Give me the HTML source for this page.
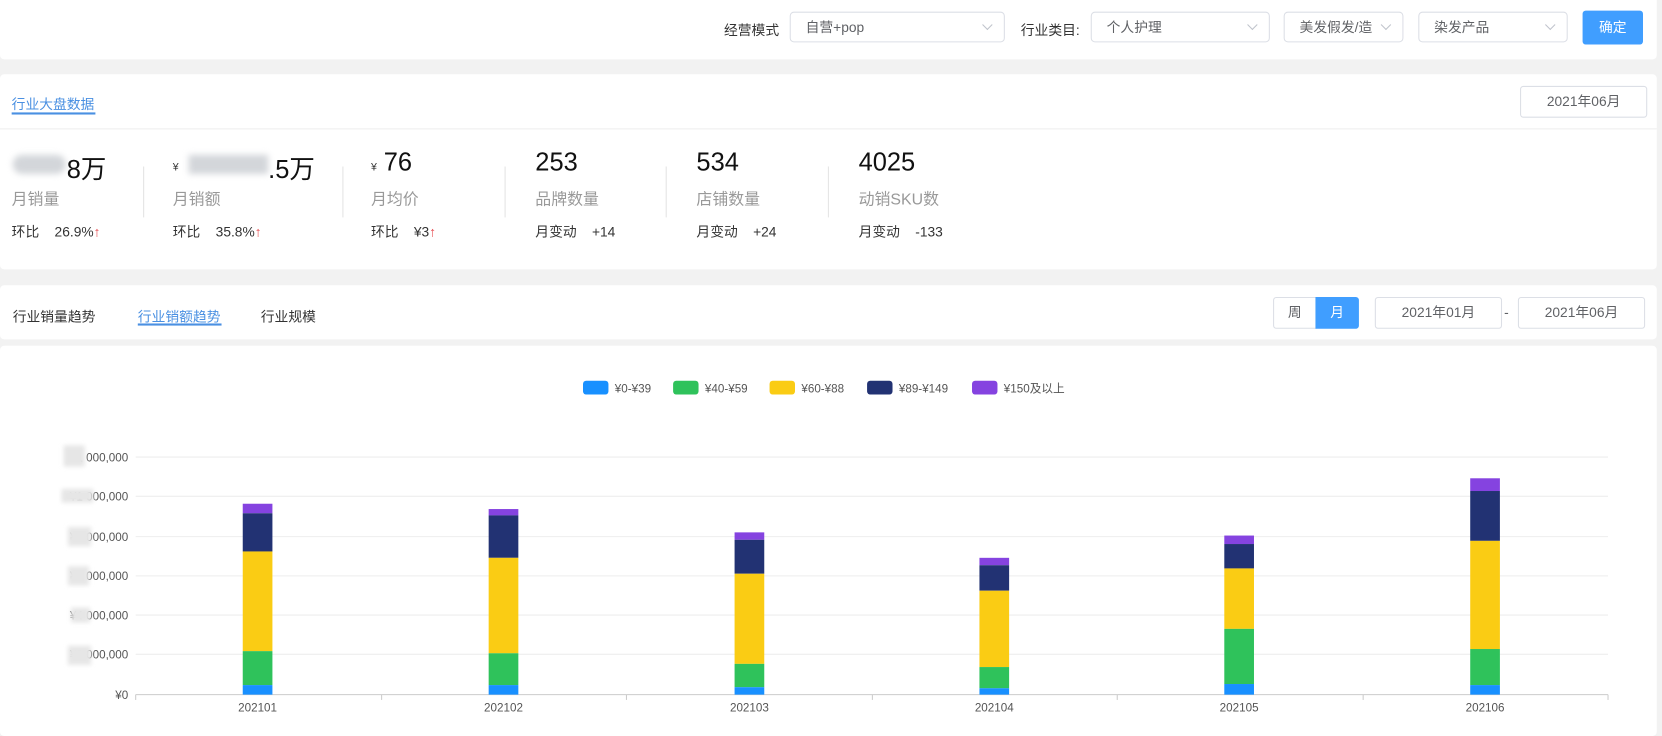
<!DOCTYPE html>
<html><head><meta charset="utf-8"><style>
html,body{margin:0;padding:0;width:1662px;height:736px;overflow:hidden;background:#f2f2f2;}
#w{position:absolute;left:0;top:0;width:1568px;height:694px;transform:scale(1.06,1.0605);transform-origin:0 0;font-family:"Liberation Sans","Noto Sans CJK SC",sans-serif;color:#333;}
.a{position:absolute;white-space:nowrap;}
.card{position:absolute;left:0;width:1563px;background:#fff;border-radius:4px;}
.sel{position:absolute;height:29px;border:1px solid #dcdfe6;border-radius:4px;box-sizing:border-box;font-size:13px;color:#606266;line-height:27px;padding-left:14px;padding-right:26px;background:#fff;overflow:hidden;text-overflow:clip;}
.sel:after{content:"";position:absolute;right:12px;top:8px;width:6px;height:6px;border-right:1px solid #c0c4cc;border-bottom:1px solid #c0c4cc;transform:rotate(45deg);background:#fff;}
.box{position:absolute;height:30px;border:1px solid #dcdfe6;border-radius:3px;box-sizing:border-box;font-size:13px;color:#606266;line-height:28px;text-align:center;background:#fff;}
.big{font-size:24px;color:#111;top:140px;}
.lab{font-size:15px;color:#999;top:177px;}
.row{font-size:13px;color:#333;top:208px;}
.up{color:#e5484d;}
.dv{position:absolute;top:157px;width:1px;height:48px;background:#e4e4e4;}
.blur{position:absolute;background:#d3d6da;filter:blur(3px);}
</style></head><body><div id="w">
<div class="card" style="top:0;height:56px;border-radius:0 0 4px 4px"></div>
<div class="a" style="left:683px;top:18px;font-size:13px">经营模式</div>
<div class="sel" style="left:745px;top:11px;width:203px">自营+pop</div>
<div class="a" style="left:963px;top:18px;font-size:13px">行业类目:</div>
<div class="sel" style="left:1029px;top:11px;width:169px">个人护理</div>
<div class="sel" style="left:1211px;top:11px;width:113px">美发假发/造型</div>
<div class="sel" style="left:1338px;top:11px;width:141px">染发产品</div>
<div class="a" style="left:1493px;top:10px;width:57px;height:32px;background:#409eff;border-radius:3px;color:#fff;font-size:13px;line-height:32px;text-align:center">确定</div>

<div class="card" style="top:70px;height:184px"></div>
<div class="a" style="left:11px;top:88px;font-size:13px;color:#4a90e2">行业大盘数据</div>
<div class="a" style="left:11px;top:106px;width:79px;height:2px;background:#4a90e2"></div>
<div class="a" style="left:0;top:121px;width:1563px;height:1px;background:#eee"></div>
<div class="box" style="left:1434px;top:81px;width:120px">2021年06月</div>

<div class="blur" style="left:12px;top:146px;width:50px;height:18px;border-radius:9px"></div>
<div class="a big" style="left:63px">8万</div>
<div class="a" style="left:163px;top:153px;font-size:10px">¥</div>
<div class="blur" style="left:178px;top:146px;width:75px;height:18px"></div>
<div class="a big" style="left:253px">.5万</div>
<div class="a" style="left:350px;top:153px;font-size:10px">¥</div>
<div class="a big" style="left:362px">76</div>
<div class="a big" style="left:505px">253</div>
<div class="a big" style="left:657px">534</div>
<div class="a big" style="left:810px">4025</div>
<div class="a lab" style="left:11px">月销量</div>
<div class="a lab" style="left:163px">月销额</div>
<div class="a lab" style="left:350px">月均价</div>
<div class="a lab" style="left:505px">品牌数量</div>
<div class="a lab" style="left:657px">店铺数量</div>
<div class="a lab" style="left:810px">动销SKU数</div>
<div class="a row" style="left:11px">环比 &nbsp;&nbsp;&nbsp;26.9%<span class="up">↑</span></div>
<div class="a row" style="left:163px">环比 &nbsp;&nbsp;&nbsp;35.8%<span class="up">↑</span></div>
<div class="a row" style="left:350px">环比 &nbsp;&nbsp;&nbsp;¥3<span class="up">↑</span></div>
<div class="a row" style="left:505px">月变动 &nbsp;&nbsp;&nbsp;+14</div>
<div class="a row" style="left:657px">月变动 &nbsp;&nbsp;&nbsp;+24</div>
<div class="a row" style="left:810px">月变动 &nbsp;&nbsp;&nbsp;-133</div>
<div class="dv" style="left:135px"></div><div class="dv" style="left:323px"></div><div class="dv" style="left:476px"></div><div class="dv" style="left:628px"></div><div class="dv" style="left:781px"></div>

<div class="card" style="top:269px;height:51px"></div>
<div class="a" style="left:12px;top:288px;font-size:13px">行业销量趋势</div>
<div class="a" style="left:130px;top:288px;font-size:13px;color:#4a90e2">行业销额趋势</div>
<div class="a" style="left:130px;top:305px;width:79px;height:2px;background:#4a90e2"></div>
<div class="a" style="left:246px;top:288px;font-size:13px">行业规模</div>
<div class="box" style="left:1201px;top:280px;width:41px;border-radius:3px 0 0 3px">周</div>
<div class="box" style="left:1241px;top:280px;width:41px;border-radius:0 3px 3px 0;background:#409eff;border-color:#409eff;color:#fff">月</div>
<div class="box" style="left:1297px;top:280px;width:120px">2021年01月</div>
<div class="a" style="left:1419px;top:287px;font-size:13px;color:#606266">-</div>
<div class="box" style="left:1432px;top:280px;width:120px">2021年06月</div>

<div class="card" style="top:326px;height:368px"></div>
<svg class="a" style="left:0;top:0" width="1568" height="694" font-family="Liberation Sans,Noto Sans CJK SC,sans-serif" font-size="11" fill="#555">
<defs><filter id="b"><feGaussianBlur stdDeviation="2"/></filter></defs>
<g>
<rect x="550" y="359" width="24" height="13" rx="3" fill="#1890ff"/><text x="580" y="370">¥0-¥39</text>
<rect x="635" y="359" width="24" height="13" rx="3" fill="#2fc25b"/><text x="665" y="370">¥40-¥59</text>
<rect x="726" y="359" width="24" height="13" rx="3" fill="#facc14"/><text x="756" y="370">¥60-¥88</text>
<rect x="818" y="359" width="24" height="13" rx="3" fill="#223273"/><text x="848" y="370">¥89-¥149</text>
<rect x="917" y="359" width="24" height="13" rx="3" fill="#8543e0"/><text x="947" y="370">¥150及以上</text>
</g>
<g stroke="#eee"><line x1="128" x2="1517" y1="431" y2="431"/><line x1="128" x2="1517" y1="468" y2="468"/><line x1="128" x2="1517" y1="506" y2="506"/><line x1="128" x2="1517" y1="543" y2="543"/><line x1="128" x2="1517" y1="580" y2="580"/><line x1="128" x2="1517" y1="617" y2="617"/></g>
<g stroke="#ccc"><line x1="128" x2="1517" y1="655" y2="655"/>
<line x1="128" x2="128" y1="655" y2="660"/><line x1="360" x2="360" y1="655" y2="660"/><line x1="591" x2="591" y1="655" y2="660"/><line x1="823" x2="823" y1="655" y2="660"/><line x1="1054" x2="1054" y1="655" y2="660"/><line x1="1286" x2="1286" y1="655" y2="660"/><line x1="1517" x2="1517" y1="655" y2="660"/></g>
<g text-anchor="end"><text x="121" y="435">¥1 000,000</text><text x="121" y="472">¥1 000,000</text><text x="121" y="510">¥1 000,000</text><text x="121" y="547">¥1 000,000</text><text x="121" y="584">¥4 000,000</text><text x="121" y="621">¥2 000,000</text><text x="121" y="659">¥0</text></g>
<g fill="#e6e6e6" filter="url(#b)"><rect x="60" y="420" width="20" height="20"/><rect x="58" y="461" width="30" height="13"/><rect x="64" y="497" width="22" height="18"/><rect x="64" y="534" width="20" height="18"/><rect x="67" y="573" width="18" height="14"/><rect x="64" y="609" width="22" height="18"/></g>
<g text-anchor="middle"><text x="243" y="671">202101</text><text x="475" y="671">202102</text><text x="707" y="671">202103</text><text x="938" y="671">202104</text><text x="1169" y="671">202105</text><text x="1401" y="671">202106</text></g>
<g>
<rect x="229" y="475" width="28" height="9" fill="#8543e0"/><rect x="229" y="484" width="28" height="36" fill="#223273"/><rect x="229" y="520" width="28" height="94" fill="#facc14"/><rect x="229" y="614" width="28" height="32" fill="#2fc25b"/><rect x="229" y="646" width="28" height="9" fill="#1890ff"/>
<rect x="461" y="480" width="28" height="6" fill="#8543e0"/><rect x="461" y="486" width="28" height="40" fill="#223273"/><rect x="461" y="526" width="28" height="90" fill="#facc14"/><rect x="461" y="616" width="28" height="30" fill="#2fc25b"/><rect x="461" y="646" width="28" height="9" fill="#1890ff"/>
<rect x="693" y="502" width="28" height="7" fill="#8543e0"/><rect x="693" y="509" width="28" height="32" fill="#223273"/><rect x="693" y="541" width="28" height="85" fill="#facc14"/><rect x="693" y="626" width="28" height="22" fill="#2fc25b"/><rect x="693" y="648" width="28" height="7" fill="#1890ff"/>
<rect x="924" y="526" width="28" height="7" fill="#8543e0"/><rect x="924" y="533" width="28" height="24" fill="#223273"/><rect x="924" y="557" width="28" height="72" fill="#facc14"/><rect x="924" y="629" width="28" height="20" fill="#2fc25b"/><rect x="924" y="649" width="28" height="6" fill="#1890ff"/>
<rect x="1155" y="505" width="28" height="8" fill="#8543e0"/><rect x="1155" y="513" width="28" height="23" fill="#223273"/><rect x="1155" y="536" width="28" height="57" fill="#facc14"/><rect x="1155" y="593" width="28" height="52" fill="#2fc25b"/><rect x="1155" y="645" width="28" height="10" fill="#1890ff"/>
<rect x="1387" y="451" width="28" height="12" fill="#8543e0"/><rect x="1387" y="463" width="28" height="47" fill="#223273"/><rect x="1387" y="510" width="28" height="102" fill="#facc14"/><rect x="1387" y="612" width="28" height="34" fill="#2fc25b"/><rect x="1387" y="646" width="28" height="9" fill="#1890ff"/>
</g>
</svg>
</div></body></html>
